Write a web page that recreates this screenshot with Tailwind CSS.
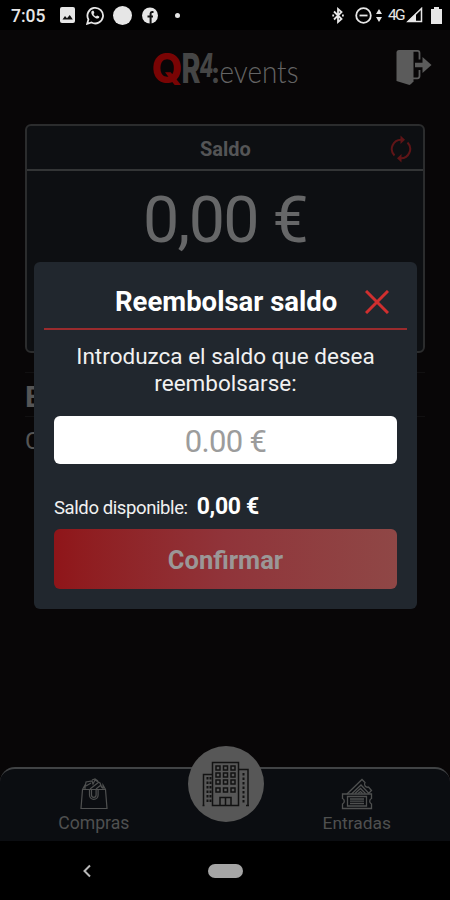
<!DOCTYPE html>
<html lang="es">
  <head>
    <meta charset="UTF-8" />
    <meta name="viewport" content="width=device-width, initial-scale=1.0" />
    <title>Reembolsar saldo</title>
    <script src="https://cdn.jsdelivr.net/npm/@tailwindcss/browser@4"></script>
  </head>
  <body class="bg-black">
    <div
      class="relative w-[450px] h-[900px] flex flex-col overflow-hidden bg-[#080607] font-['Roboto',sans-serif]"
    >
      <!-- status bar -->
      <div class="h-[30px] shrink-0 bg-black flex items-center text-[#e6e6e6]">
        <span class="ml-[11px] w-[49px] text-[17.5px] leading-none font-medium mt-[3px]">7:05</span>
        <svg class="w-[15px] h-[16px]" viewBox="0 0 15 16">
          <rect width="15" height="16" rx="2" fill="#e6e6e6" />
          <path d="M2.5 12.5 5 9l2 2.2L9.8 8l3 4.5z" fill="#111" />
        </svg>
        <svg class="ml-[11px] w-[18px] h-[19px]" viewBox="0 0 18 19" fill="none">
          <path d="M1.2 17.8 2.4 13.4A7.8 7.8 0 1 1 5.5 16.5z" stroke="#e6e6e6" stroke-width="1.8" />
          <path d="M6.2 4.7c-1.8 1.5-.6 4.1 1.2 5.8s4.4 2.9 5.7 1.3l.2-1.200-2.200-1.200-1.200 1.200C8.500 10 7.900 9 7.500 8l.9-1.100-.8-2.200z" fill="#e6e6e6" />
        </svg>
        <span class="ml-[9px] w-[19px] h-[19px] rounded-full bg-[#e6e6e6]"></span>
        <svg class="ml-[10px] w-[16px] h-[17px]" viewBox="0 0 16 17">
          <circle cx="8" cy="8.5" r="8" fill="#e6e6e6" />
          <path d="M11.5 5H10Q8.6 5 8.6 6.5V17M5.5 9.5h5.5" fill="none" stroke="#111" stroke-width="2" />
        </svg>
        <span class="ml-[17px] w-[5px] h-[5px] rounded-full bg-[#e6e6e6]"></span>
        <svg class="ml-[152px] w-[12px] h-[17px]" viewBox="0 0 12 17" fill="none" stroke="#e6e6e6" stroke-width="1.8">
          <path d="M2 4.5 9.5 12 6 15V2L9.5 5 2 12.5M.3 8.500h1.800M10 8.500h1.800" />
        </svg>
        <svg class="ml-[11px] w-[17px] h-[17px]" viewBox="0 0 17 17" fill="none" stroke="#e6e6e6" stroke-width="1.8">
          <circle cx="8.5" cy="8.5" r="7.3" />
          <path d="M4.5 8.5h8" />
        </svg>
        <svg class="ml-[4px] w-[6px] h-[13px]" viewBox="0 0 6 13" fill="#e6e6e6">
          <path d="M3 0 6 5H0zM3 13 0 8h6z" />
        </svg>
        <span class="ml-[6px] w-[17px] text-[15.5px] leading-none tracking-[-1.8px] mt-[2px]">4G</span>
        <svg class="ml-[1px] w-[17px] h-[16px]" viewBox="0 0 17 16">
          <path d="M15.5 1.5v13H2z" fill="none" stroke="#e6e6e6" stroke-width="1.5" />
          <path d="M10 6.5V15H1z" fill="#e6e6e6" />
        </svg>
        <svg class="ml-[8px] w-[11px] h-[17px]" viewBox="0 0 11 17" fill="#e6e6e6">
          <path d="M3 0h5v2h3v15H0V2h3z" />
        </svg>
      </div>

      <!-- header -->
      <header class="h-[94px] shrink-0 flex items-start pt-[18px]">
        <svg class="ml-[150px] w-[152px] h-[42px] overflow-visible" viewBox="150 48 152 42">
          <g font-family="Inter, sans-serif" font-weight="800">
            <text x="151.5" y="83" font-size="41" fill="#790404" textLength="31" lengthAdjust="spacingAndGlyphs">Q</text>
            <text x="181.5" y="83" font-size="41" fill="#454545" textLength="19" lengthAdjust="spacingAndGlyphs">R</text>
            <text x="199.5" y="77" font-size="33" font-style="italic" fill="#454545" textLength="14" lengthAdjust="spacingAndGlyphs">4</text>
            <text x="211" y="82.5" font-size="29" fill="#454545" textLength="9" lengthAdjust="spacingAndGlyphs">:</text>
          </g>
          <text x="219.5" y="83" font-family="Lato, sans-serif" font-weight="300" font-size="31" fill="#646464" textLength="79" lengthAdjust="spacingAndGlyphs">events</text>
        </svg>
        <svg class="ml-[93px] w-[37px] h-[38px]" viewBox="395 48 37 38">
          <path d="M399 50h12v34l-1.500 1-13-4V52.500Q396.500 50 399 50z" fill="#5b5b5b" />
          <path d="M410 50.900h7.500q2 0 2 2.200v6.500M410 78.300h7.500q2 0 2-2.200V70" fill="none" stroke="#5b5b5b" stroke-width="1.800" />
          <path d="M411 50h2.500v31.500L411 84z" fill="#5b5b5b" />
          <path d="M415 62.800h7.500V57l9 8-9 8v-5.800H415z" fill="#5b5b5b" />
        </svg>
      </header>

      <!-- balance card -->
      <section
        class="mx-[25px] h-[229px] shrink-0 flex flex-col rounded-[6px] border-2 border-[#2b2c2d] bg-[#0d0f12]"
      >
        <div class="h-[45px] shrink-0 flex items-center border-b-2 border-[#333536]">
          <h2 class="ml-[173px] mt-[2px] w-[190px] text-[20px] font-bold text-[#545556]">Saldo</h2>
          <svg class="mt-[2px] w-[22px] h-[28px]" viewBox="0 0 22 28" fill="none" stroke="#5f1517" stroke-width="2">
            <path d="M4.5 20.5A9.3 9.3 0 0 1 11.5 4.7M17.5 7.5A9.3 9.3 0 0 1 10.5 23.3" />
            <path d="M10.5 0.5 15 4.7 10.5 9zM11.5 19 7 23.3l4.5 4.2z" fill="#5f1517" stroke="none" />
          </svg>
        </div>
        <p class="mt-[11px] text-center text-[64.5px] leading-[76px] tracking-[-1.6px] text-[#666768]">0,00 €</p>
      </section>

      <!-- content behind the dialog -->
      <section class="mx-[25px] mt-[19px] flex flex-col text-[#555]">
        <h3 class="h-[45px] border-y border-[#111011] text-[30px] leading-[47px] font-bold overflow-hidden">E</h3>
        <p class="mt-[8px] text-[24px] leading-[32px]">C</p>
      </section>

      <!-- bottom tabs -->
      <nav
        class="mt-auto h-[74px] shrink-0 flex items-start justify-between rounded-t-[15px] border-t-2 border-[#414345] bg-[#0b0d11] text-[#4f5050]"
      >
        <a class="w-[188px] pt-[9px] flex flex-col items-center">
          <svg class="w-[28px] h-[32px]" viewBox="0 0 28 32" fill="none" stroke="#4f5050" stroke-width="1.2">
            <path d="M2.5 11.5h23L27 30.5H1z" />
            <path d="M2.5 11.5 5 7v4M25.5 11.5 23 7v4M5 10l1-6 6-1 1 3 2-4 5 3 2 5M10 11 19 4M6 8l5-3M12 2l3-1 3 2M16 11l5-4" />
            <path d="M9.5 12v5a4.3 4.3 0 0 0 8.6 0v-5M11.5 12v5a2.3 2.3 0 0 0 4.6 0v-5" />
          </svg>
          <span class="mt-[3px] text-[17.6px] leading-[21px]">Compras</span>
        </a>
        <a class="-mt-[23px] w-[76px] h-[76px] shrink-0 rounded-full bg-[#575757] flex items-center justify-center">
          <svg class="w-[48px] h-[46px]" viewBox="202 761 48 46" fill="none" stroke="#121212" stroke-width="1.5">
            <path d="M212.5 805.5V762.5H238.5V805.5zM203.5 806V774.5h9M238.5 769.5h9.5V806M202.5 805.5h2M246 805.5h3" />
            <path d="M220 805v-7.5h11V805M225.5 797.5v8" />
            <path d="M216 766h4v4h-4zM223.5 766h4v4h-4zM231 766h4v4h-4zM216 773h4v4h-4zM223.5 773h4v4h-4zM231 773h4v4h-4zM216 780h4v4h-4zM223.5 780h4v4h-4zM231 780h4v4h-4zM216 788h4v4h-4zM223.5 788h4v4h-4zM231 788h4v4h-4z" />
            <path d="M207.5 777v26M210.5 777v26M243.5 773v30" stroke-dasharray="2.5 2" stroke-width="2" />
          </svg>
        </a>
        <a class="w-[187px] pt-[9px] flex flex-col items-center">
          <svg class="w-[32px] h-[32px]" viewBox="0 0 32 32" fill="none" stroke="#4f5050" stroke-width="1.3">
            <path d="M1.5 16h29v4.5a3 3 0 0 0 0 5.5v4.5h-29V26a3 3 0 0 0 0-5.5z" />
            <path d="M6.5 18.5h19v9.5h-19zM9 21h14M9 23.2h14M9 25.5h14" />
            <path d="M6 16 21 1.5l3 3a3 3 0 0 0 3.5 4.5l3 3.5-3 3M10.5 16 20 7l8 8.5M14 15.5l5.5-5 5 5M17 15.5l2.5-2 2 2" />
          </svg>
          <span class="mt-[3px] text-[17.4px] leading-[21px]">Entradas</span>
        </a>
      </nav>

      <!-- android navigation -->
      <div class="h-[59px] shrink-0 bg-black flex items-center">
        <svg class="ml-[82px] w-[9px] h-[14px]" viewBox="0 0 9 14" fill="none" stroke="#b9b9b9" stroke-width="2">
          <path d="M8 1.5 2.5 7 8 12.5" />
        </svg>
        <span class="ml-[117px] w-[35px] h-[14px] rounded-full bg-[#a5a5a5]"></span>
      </div>

      <!-- refund dialog -->
      <div
        class="absolute left-[34px] top-[262px] w-[383px] h-[347px] rounded-[6px] bg-[#21272e] px-[10px] flex flex-col text-[#f1f1f1]"
      >
        <div class="h-[68px] shrink-0 flex items-center border-b-2 border-[#9a2b2d]">
          <h1 class="ml-[71px] w-[250px] mt-[14px] text-[27.5px] leading-[32px] font-bold text-white whitespace-nowrap">Reembolsar saldo</h1>
          <svg class="mt-[14px] w-[24px] h-[24px]" viewBox="0 0 24 24" stroke="#d02f2f" stroke-width="3">
            <path d="M1 1 23 23M23 1 1 23" />
          </svg>
        </div>
        <p class="mt-[13px] text-center text-[22.5px] leading-[27px]">Introduzca el saldo que desea<br />reembolsarse:</p>
        <div
          class="mx-[10px] mt-[19px] pt-[5px] h-[48px] shrink-0 rounded-[6px] bg-white flex items-center justify-center text-[31px] tracking-[-0.7px] text-[#9c9c9c]"
        >
          0.00 €
        </div>
        <div class="mx-[10px] mt-[28px] h-[30px] shrink-0 flex items-baseline">
          <span class="text-[18.5px] leading-[30px] tracking-[-0.4px]">Saldo disponible:</span>
          <span class="ml-[9px] text-[23px] leading-[30px] tracking-[-0.3px] font-bold text-white">0,00 €</span>
        </div>
        <button
          class="mx-[10px] mt-[7px] pt-[3px] h-[60px] shrink-0 rounded-[6px] bg-linear-to-r from-[#8f1519] via-[#90343a] to-[#8f4746] text-[25.5px] font-bold text-[#9b9797]"
        >
          Confirmar
        </button>
      </div>
    </div>
  </body>
</html>
